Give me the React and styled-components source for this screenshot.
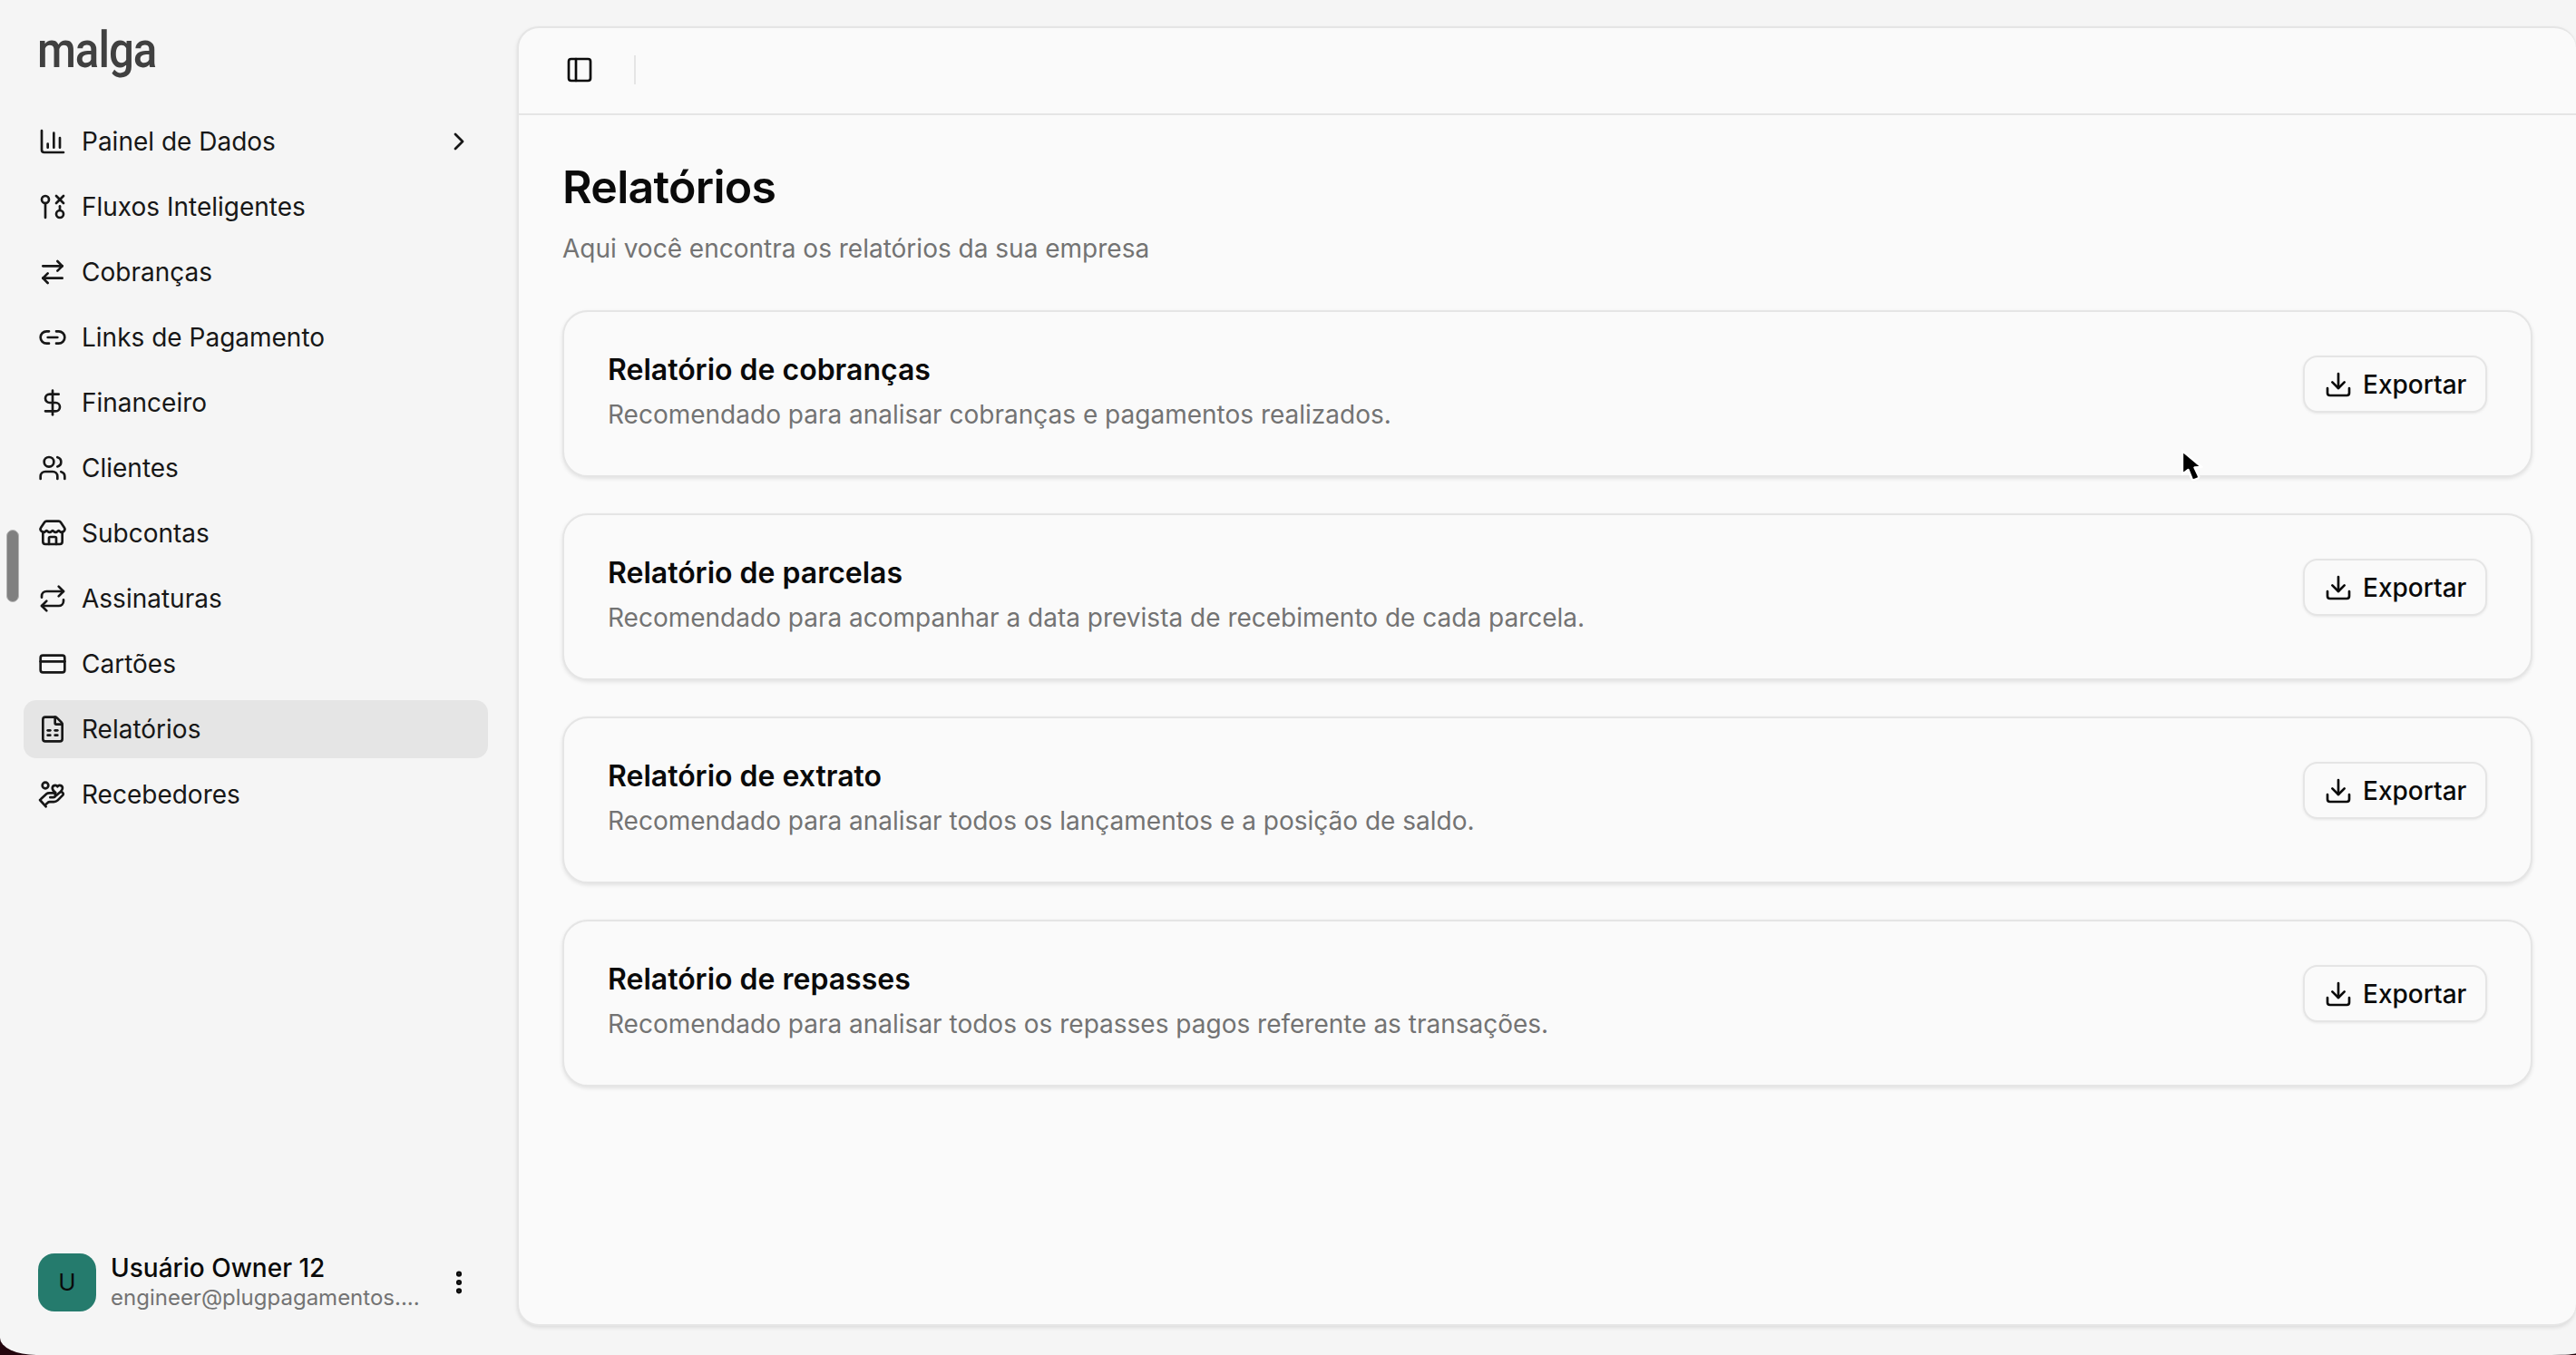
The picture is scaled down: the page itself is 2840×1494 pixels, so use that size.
import React from 'react';
import styled, { createGlobalStyle } from 'styled-components';
import {
  ChartColumn, GitPullRequestClosed, ArrowRightLeft, Link2, DollarSign, Users, Store,
  Repeat, CreditCard, FileSpreadsheet, ChevronRight, PanelLeft, Download, EllipsisVertical,
} from 'lucide-react';

const Global = createGlobalStyle`
  html, body { margin: 0; padding: 0; background: #24060e; }
  * { box-sizing: border-box; }
  body { font-family: Inter, "Liberation Sans", sans-serif; overflow: hidden; }
`;

const Window = styled.div`
  position: relative;
  width: 2840px;
  height: 1494px;
  display: flex;
  background: #f5f5f5;
  border-radius: 0 0 27px 40px / 0 0 2px 19px;
  overflow: hidden;
  color: #0a0a0a;
`;

const Sidebar = styled.aside`
  width: 570px;
  flex: none;
  display: flex;
  flex-direction: column;
  padding: 0 26px;
`;

const Logo = styled.div`
  height: 124px;
  padding: 24px 0 0 15px;
  font-family: Roboto, sans-serif;
  font-weight: 500;
  font-size: 56px;
  line-height: 62px;
  letter-spacing: -1.2px;
  color: #404040;
  transform: scaleX(0.88);
  transform-origin: 15px 0;
`;

const Nav = styled.nav`
  display: flex;
  flex-direction: column;
  gap: 8px;
`;

const NavRow = styled.div`
  height: 64px;
  width: 512px;
  display: flex;
  align-items: center;
  gap: 16px;
  padding: 0 16px;
  border-radius: 14px;
  font-size: 28px;
  color: #171717;
  background: ${(p) => (p.$active ? '#e5e5e5' : 'transparent')};
  svg { flex: none; }
`;

const NavLabel = styled.span`
  flex: 1;
`;

const Footer = styled.div`
  margin-top: auto;
  margin-bottom: 48px;
  margin-left: 16px;
  width: 480px;
  display: flex;
  align-items: center;
  gap: 16px;
`;

const Avatar = styled.div`
  width: 64px;
  height: 64px;
  flex: none;
  border-radius: 18px;
  background: #257b6d;
  display: flex;
  align-items: center;
  justify-content: center;
  font-size: 26px;
  color: #0a0a0a;
`;

const UserText = styled.div`
  flex: 1;
  min-width: 0;
  display: flex;
  flex-direction: column;
  gap: 2px;
  padding-top: 1px;
`;

const UserName = styled.div`
  font-size: 28px;
  line-height: 32px;
  font-weight: 500;
  color: #0a0a0a;
`;

const UserMail = styled.div`
  font-size: 24px;
  line-height: 30px;
  color: #737373;
  white-space: nowrap;
`;

const ScrollThumb = styled.div`
  position: absolute;
  left: 7px;
  top: 584px;
  width: 14px;
  height: 80px;
  border-radius: 7px;
  background: #808080;
  border: 1.5px solid #b5b5b5;
`;

const Main = styled.main`
  flex: 1;
  margin: 29px 0 32px;
  background: #fafafa;
  border: 2px solid #e5e5e5;
  border-right: none;
  border-radius: 24px;
  box-shadow: 0 2px 4px rgba(0, 0, 0, 0.1);
  display: flex;
  flex-direction: column;
  min-width: 0;
`;

const TopBar = styled.header`
  height: 96px;
  flex: none;
  display: flex;
  align-items: center;
  padding: 0 0 3px 51px;
  border-bottom: 2px solid #e5e5e5;
  color: #0a0a0a;
`;

const TopDivider = styled.div`
  width: 2px;
  height: 32px;
  margin-left: 44px;
  background: #e5e5e5;
`;

const Content = styled.div`
  flex: 1;
  padding: 49px 48px 0 48px;
  display: flex;
  flex-direction: column;
`;

const Title = styled.h1`
  margin: 0;
  font-size: 50px;
  line-height: 60px;
  font-weight: 600;
  letter-spacing: -0.7px;
  color: #0a0a0a;
`;

const Subtitle = styled.p`
  margin: 18px 0 0;
  font-size: 28px;
  line-height: 40px;
  color: #737373;
`;

const CardList = styled.div`
  margin-top: 48px;
  display: flex;
  flex-direction: column;
  gap: 40px;
`;

const Card = styled.section`
  height: 184px;
  display: flex;
  justify-content: space-between;
  align-items: flex-start;
  padding: 44px 48px 0 48px;
  background: #fafafa;
  border: 2px solid #e5e5e5;
  border-radius: 28px;
  box-shadow: 0 2px 4px rgba(0, 0, 0, 0.1);
`;

const CardText = styled.div`
  display: flex;
  flex-direction: column;
  gap: 9px;
`;

const CardTitle = styled.h2`
  margin: 0;
  font-size: 32px;
  line-height: 40px;
  font-weight: 600;
  color: #0a0a0a;
`;

const CardDesc = styled.p`
  margin: 0;
  font-size: 28px;
  line-height: 40px;
  color: #737373;
`;

const ExportButton = styled.button`
  width: 203px;
  height: 63px;
  margin-top: 4px;
  flex: none;
  display: flex;
  align-items: center;
  gap: 11px;
  padding: 0 0 0 21px;
  background: #fafafa;
  border: 2px solid #e5e5e5;
  border-radius: 16px;
  box-shadow: 0 1px 3px rgba(0, 0, 0, 0.08);
  font-family: inherit;
  font-size: 28px;
  font-weight: 500;
  color: #0a0a0a;
`;

const Cursor = styled.svg`
  position: absolute;
  left: 2401px;
  top: 493px;
  width: 32px;
  height: 42px;
`;

const RecipientIcon = () => (
  <svg width="32" height="32" viewBox="0 0 24 24" fill="none" stroke="currentColor" strokeWidth="2" strokeLinecap="round" strokeLinejoin="round">
    <circle cx="6" cy="4.5" r="2.5" />
    <path d="M2.5 15.5L7 11.5c.6-.5 1.2-.7 2-.7h3.5a1.8 1.8 0 0 1 0 3.6H10" />
    <path d="M6.5 20l1.5-1.3c.4-.4.9-.6 1.5-.6h3.5c1.3 0 2.4-.5 3.2-1.3l4.3-4.3a1.7 1.7 0 0 0-2.4-2.3l-3 2.6" />
    <path d="M1.5 16.5l5 5.5" />
    <path d="M14.5 10.5c-1.5-1-2.7-2.2-2.7-3.7a2.3 2.3 0 0 1 4.2-1.3 2.3 2.3 0 0 1 4.2 1.3c0 1-.6 2-1.5 2.8" />
  </svg>
);

const items = [
  ['Painel de Dados', ChartColumn],
  ['Fluxos Inteligentes', GitPullRequestClosed],
  ['Cobranças', ArrowRightLeft],
  ['Links de Pagamento', Link2],
  ['Financeiro', DollarSign],
  ['Clientes', Users],
  ['Subcontas', Store],
  ['Assinaturas', Repeat],
  ['Cartões', CreditCard],
  ['Relatórios', FileSpreadsheet],
  ['Recebedores', RecipientIcon],
];

const reports = [
  ['Relatório de cobranças', 'Recomendado para analisar cobranças e pagamentos realizados.'],
  ['Relatório de parcelas', 'Recomendado para acompanhar a data prevista de recebimento de cada parcela.'],
  ['Relatório de extrato', 'Recomendado para analisar todos os lançamentos e a posição de saldo.'],
  ['Relatório de repasses', 'Recomendado para analisar todos os repasses pagos referente as transações.'],
];

export default function App() {
  return (
    <>
      <Global />
      <Window>
        <Sidebar>
          <Logo>malga</Logo>
          <Nav>
            {items.map(([label, Icon], i) => (
              <NavRow key={label} $active={label === 'Relatórios'}>
                <Icon size={32} />
                <NavLabel>{label}</NavLabel>
                {i === 0 && <ChevronRight size={32} />}
              </NavRow>
            ))}
          </Nav>
          <Footer>
            <Avatar>U</Avatar>
            <UserText>
              <UserName>Usuário Owner 12</UserName>
              <UserMail>engineer@plugpagamentos....</UserMail>
            </UserText>
            <EllipsisVertical size={32} strokeWidth={2.6} />
          </Footer>
        </Sidebar>
        <ScrollThumb />
        <Main>
          <TopBar>
            <PanelLeft size={32} />
            <TopDivider />
          </TopBar>
          <Content>
            <Title>Relatórios</Title>
            <Subtitle>Aqui você encontra os relatórios da sua empresa</Subtitle>
            <CardList>
              {reports.map(([title, desc]) => (
                <Card key={title}>
                  <CardText>
                    <CardTitle>{title}</CardTitle>
                    <CardDesc>{desc}</CardDesc>
                  </CardText>
                  <ExportButton>
                    <Download size={32} />
                    Exportar
                  </ExportButton>
                </Card>
              ))}
            </CardList>
          </Content>
        </Main>
        <Cursor viewBox="0 0 32 42">
          <path d="M5 4 L5 30 L11.5 25 L15.5 35 Q16.2 36.5 18 36 L22 34.5 Q23.5 33.5 23 32 L18.5 22.5 L26.5 22 Z" fill="#000" stroke="#fff" strokeWidth="2.4" strokeLinejoin="round" />
        </Cursor>
      </Window>
    </>
  );
}
